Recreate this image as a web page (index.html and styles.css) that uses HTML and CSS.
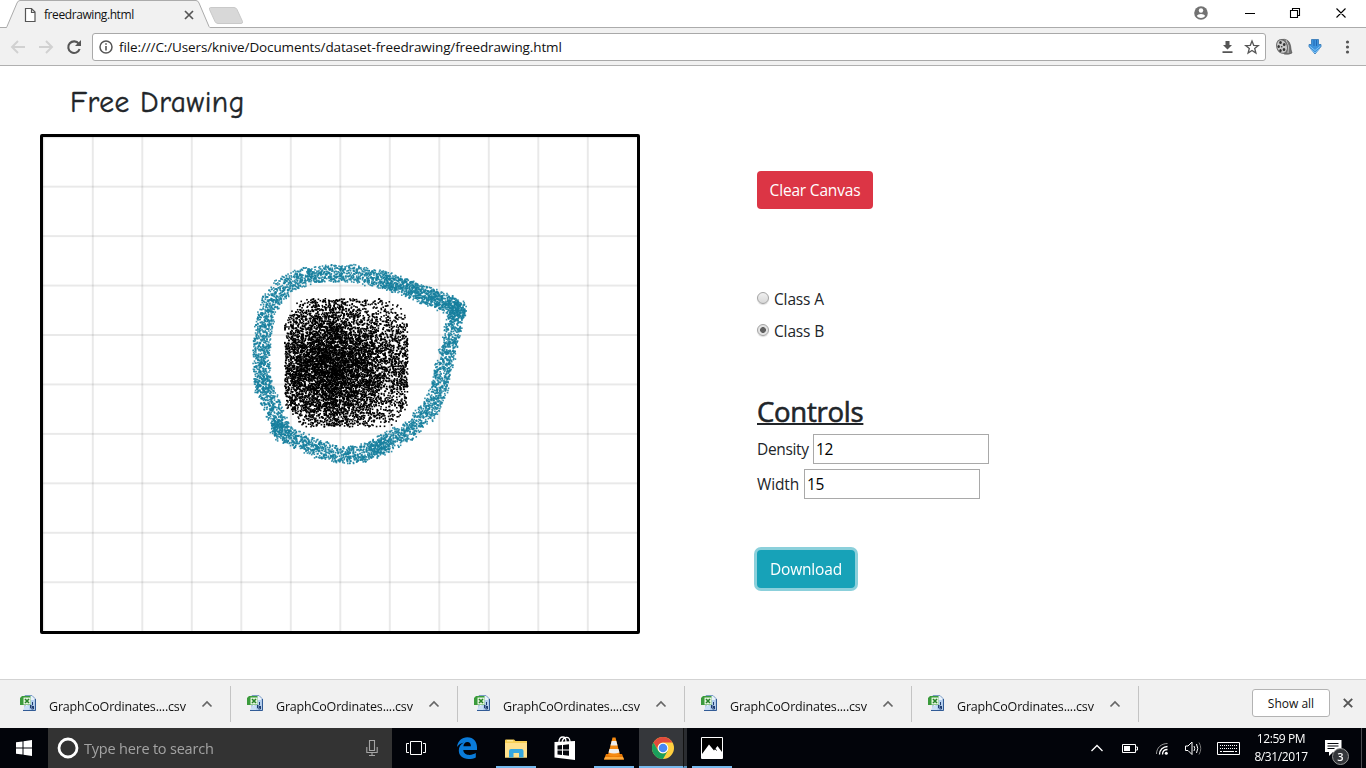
FILE: index.html
```html
<!DOCTYPE html>
<html lang="en">
<head>
<meta charset="utf-8">
<title>freedrawing.html</title>
<link rel="stylesheet" href="styles.css">
</head>
<body>
<svg class="defs" width="0" height="0" aria-hidden="true">
  <symbol id="csv" viewBox="0 0 16 16">
    <path d="M5 .5h7l3 3v12H5z" fill="#e8f1fb" stroke="#7b9cc6"/>
    <path d="M8 5h6.500v10H7z" fill="#b4cff0"/><path d="M5 11h4v4H3z" fill="#c9def5"/>
    <path d="M15.500 4v11.500H3" stroke="#315b96" fill="none"/>
    <path d="M2 1h8.500v9H0V3z" fill="#3b9b3c"/><path d="M3.500 2.500h7v7h-7z" fill="#e6f4df"/>
    <path d="M5 4l4 4M9 4L5 8" stroke="#278229" stroke-width="1.600"/>
    <path d="M12.500 7v3M10.500 10v3h2v-2h-2M13.500 11v3h-2" stroke="#203e70" fill="none"/>
  </symbol>
  <symbol id="chevron" viewBox="0 0 12 8"><path d="M1.500 6.500L6 2l4.500 4.500" fill="none" stroke="currentColor" stroke-width="1.700"/></symbol>
</svg>

<header class="tabstrip">
  <svg class="tab-shapes" width="250" height="28" viewBox="0 0 250 28">
    <path d="M0 28.500H5Q6.500 28 7 26.500L17 3Q18 .5 20 .5H196Q198 .5 199 3L209 26.500Q210 28 212 28.500z" fill="#f1f1f1" stroke="#ababab"/>
    <path d="M210.500 7.500H234q2 0 3 2l5.500 12q.5 2-1.500 2h-23q-2 0-3-2l-5.500-12q-.5-2 1-2z" fill="#d8d8d8" stroke="#c9c9c9"/>
    <path d="M25.500 8.500h6l3.500 3.500v9.500h-9.500zM31.500 8.500v4H35" fill="#fff" stroke="#555" stroke-width="1.200"/>
    <path d="M185 11l8 8M193 11l-8 8" stroke="#555" stroke-width="1.700"/>
  </svg>
  <span class="tab-title">freedrawing.html</span>
  <svg class="window-buttons" width="166" height="28" viewBox="0 0 166 28">
    <circle cx="7" cy="13" r="6.800" fill="#727272"/><circle cx="7" cy="10.500" r="2.200" fill="#fff"/><path d="M2.800 16c1-2.700 7.400-2.700 8.400 0-2 2.600-6.400 2.600-8.400 0z" fill="#fff"/>
    <path d="M51 13.500h10M96.500 10.500h7v7h-7zM98.500 10V8.500h7v7H104M142.500 8.500l9 9M151.500 8.500l-9 9" fill="none" stroke="#000" stroke-width="1.100"/>
  </svg>
</header>

<nav class="toolbar">
  <svg class="nav-icons" width="80" height="18" viewBox="0 0 80 18" fill="none" stroke-width="2">
    <path d="M17 9H4.500M10 3L4 9l6 6M31 9h12.500M38 3l6 6-6 6" transform="translate(-1 0)" stroke="#d1d1d1" stroke-width="1.900"/>
    <path d="M69.800 5.800A5.800 5.800 0 1 0 70.600 11" stroke="#555" stroke-width="2.100"/><path d="M72 2v6h-6z" fill="#555"/>
  </svg>
  <div class="address">
    <svg width="14" height="14" viewBox="0 0 14 14"><circle cx="7" cy="7" r="6" fill="none" stroke="#555" stroke-width="1.500"/><path d="M7 6v4.500M7 3.200v1.600" stroke="#555" stroke-width="1.600"/></svg>
    <span class="url">file:///C:/Users/knive/Documents/dataset-freedrawing/freedrawing.html</span>
    <svg class="address-icons" width="40" height="16" viewBox="0 0 40 16">
      <path d="M5.500 2h4v4h2.500L7.500 10.500 3 6h2.500zM2.500 12.300h10v1.600h-10z" fill="#555"/>
      <path d="M32 2l1.700 4.300 4.600.3-3.600 2.900 1.200 4.500L32 11.500 28.100 14l1.200-4.500-3.600-2.900 4.600-.3z" fill="none" stroke="#555" stroke-width="1.300"/>
    </svg>
  </div>
  <svg class="extensions" width="84" height="20" viewBox="0 0 84 20">
    <path d="M6 2.500Q14 1 15.500 8.500q.5 5 1.500 7.500-3 2-8 1z" fill="#747474" stroke="#444" stroke-width=".6"/><path d="M11 3q4 6 2 13" stroke="#c4c4c4" fill="none"/>
    <ellipse cx="7" cy="9.500" rx="5.300" ry="7" fill="#c9c9c9" stroke="#666" transform="rotate(-18 7 9.500)"/>
    <g fill="#333"><ellipse cx="5.500" cy="5.500" rx="1.300" ry="1.600"/><ellipse cx="9.200" cy="7.500" rx="1.300" ry="1.600"/><ellipse cx="9" cy="12.500" rx="1.300" ry="1.600"/><ellipse cx="5.500" cy="13.500" rx="1.200" ry="1.500"/><ellipse cx="3.700" cy="9.500" rx="1.200" ry="1.500"/><circle cx="6.700" cy="9.700" r=".8"/></g>
    <path d="M36.500 2.500h7v5h2.500v2L40 17l-6-7.500v-2h2.500z" fill="#3d93dc" stroke="#2f74b4" stroke-width=".8"/><path d="M34.500 9l5.500 4.500L45.500 9M35.500 12l4.500 4 4.500-4" fill="none" stroke="#80c3f5"/><path d="M39 3v6M41.500 3v6" stroke="#2168b5"/>
    <g fill="#555"><circle cx="72.500" cy="5" r="1.600"/><circle cx="72.500" cy="10" r="1.600"/><circle cx="72.500" cy="15" r="1.600"/></g>
  </svg>
</nav>

<main class="page">
  <section class="drawing">
    <h1 class="title">Free Drawing</h1>
    <canvas class="board" id="board" width="594" height="494"></canvas>
  </section>
  <section class="panel">
    <button class="btn btn-danger">Clear Canvas</button>
    <div class="classes">
      <label class="choice"><span class="radio"></span><span>Class A</span></label>
      <label class="choice"><span class="radio radio-on"></span><span>Class B</span></label>
    </div>
    <h2 class="controls-title">Controls</h2>
    <label class="field"><span class="label-density">Density</span><input class="number" value="12"></label>
    <label class="field"><span>Width</span><input class="number" value="15"></label>
    <button class="btn btn-info">Download</button>
  </section>
</main>

<aside class="shelf">
  <div class="file"><svg width="16" height="16"><use href="#csv"/></svg><span class="file-name">GraphCoOrdinates....csv</span><svg class="chev" width="12" height="8"><use href="#chevron"/></svg></div>
  <div class="file"><svg width="16" height="16"><use href="#csv"/></svg><span class="file-name">GraphCoOrdinates....csv</span><svg class="chev" width="12" height="8"><use href="#chevron"/></svg></div>
  <div class="file"><svg width="16" height="16"><use href="#csv"/></svg><span class="file-name">GraphCoOrdinates....csv</span><svg class="chev" width="12" height="8"><use href="#chevron"/></svg></div>
  <div class="file"><svg width="16" height="16"><use href="#csv"/></svg><span class="file-name">GraphCoOrdinates....csv</span><svg class="chev" width="12" height="8"><use href="#chevron"/></svg></div>
  <div class="file"><svg width="16" height="16"><use href="#csv"/></svg><span class="file-name">GraphCoOrdinates....csv</span><svg class="chev" width="12" height="8"><use href="#chevron"/></svg></div>
  <button class="show-all">Show all</button>
  <svg class="shelf-close" width="10" height="10" viewBox="0 0 10 10"><path d="M.8.8l8.400 8.400M9.200.8L.8 9.200" stroke="#555" stroke-width="1.900"/></svg>
</aside>

<footer class="taskbar">
  <div class="start"><svg width="16" height="16" viewBox="0 0 16 16"><path d="M0 2.300L6.500 1.400v6.100H0zM7.500 1.200L16 0v7.500H7.500zM0 8.500h6.500v6.100L0 13.700zM7.500 8.500H16V16l-8.500-1.200z" fill="#fff"/></svg></div>
  <div class="search">
    <svg width="22" height="22" viewBox="0 0 22 22"><circle cx="11" cy="11" r="9" fill="none" stroke="#fff" stroke-width="2.800"/></svg>
    <span class="search-text">Type here to search</span>
    <svg class="mic" width="12" height="18" viewBox="0 0 12 18"><path d="M3.500 1.500h5v10h-5zM.8 8v5.500h10.400V8M6 13.500v3M3 16.500h6" fill="none" stroke="#a5a5a5" stroke-width="1.100"/></svg>
  </div>
  <div class="app app-view"><svg width="20" height="14" viewBox="0 0 20 14"><path d="M4.500.5h11v13h-11zM3 2.500H.5v9H3M17 2.500h2.500v9H17" fill="none" stroke="#fff"/></svg></div>
  <div class="app app-edge"><svg width="20" height="22" viewBox="0 0 20 22"><path d="M0 10C.8 3.800 5 .3 10.300.3 16.700.3 20 5 20 10.300V13H6.300c.2 3.500 3 4.900 6.200 4.900 2.400 0 4.500-.7 6.300-1.800v4.300c-2 1.100-4.600 1.600-7.200 1.600C5.500 22 1.800 18.600 1.800 13.600c0-3.500 1.800-6.500 5-8.100C4 6.200 1.500 7.600 0 10zm6.400-.8h7.500c0-2.500-1-4.300-3.500-4.300-2.300 0-3.700 1.800-4 4.300z" fill="#0a7bd9"/></svg></div>
  <div class="app app-folder running"><svg width="22" height="19" viewBox="0 0 22 19"><path d="M0 1.500Q0 .5 1 .5h8L10.500 2H22v16.500H0z" fill="#f7cf55"/><path d="M0 4h22v14.500H0z" fill="#ffe18d"/><path d="M2 1.800h6" stroke="#fff3b8"/><path d="M4 18.500V12q0-2 2-2h10.500q2 0 2 2v6.500H14V14H8.500v4.500z" fill="#35a7df"/></svg></div>
  <div class="app app-store"><svg width="22" height="24" viewBox="0 0 22 24"><path d="M5 6Q5 1 9 1q3 0 3 5M8 6q1-4 4-4.500Q16 1 16 6" fill="none" stroke="#fff" stroke-width="1.300"/><path d="M.5 6l20.500-1v19L.5 21.500z" fill="#fff"/><path d="M3.500 9.500l4.500-.5v4.500H3.500zM9 8.900l6-.6v5.200H9zM3.500 14.500H8V19l-4.500-.5zM9 14.500h6v5.200l-6-.6z" fill="#05070d"/></svg></div>
  <div class="app app-vlc running"><svg width="20" height="23" viewBox="0 0 20 23"><path d="M2 17h16l2 5.500H0z" fill="#e87905"/><path d="M8.500.5h3L16 18q-6 3-12 0z" fill="#f58a12"/><path d="M7.700 4h4.600l1.200 4.500h-7zM5.500 12h9l1 3.500q-5.500 2-11 0z" fill="#eee"/><path d="M1 20h18l1 2.500H0z" fill="#ffaa39"/></svg></div>
  <div class="app app-chrome running"><svg width="22" height="22" viewBox="0 0 22 22"><circle cx="11" cy="11" r="11" fill="#ffcf3f"/><path d="M1.470 5.500A11 11 0 0 1 20.500 5.500H11A5.500 5.500 0 0 0 6.200 13.700z" fill="#e04a3c"/><path d="M1.470 5.500L6.200 13.700A5.500 5.500 0 0 0 15.800 13.700L11 22A11 11 0 0 1 1.470 5.500z" fill="#1a9f5c"/><circle cx="11" cy="11" r="5.300" fill="#fff"/><circle cx="11" cy="11" r="4.300" fill="#4788f4"/></svg></div>
  <div class="app-stack"></div>
  <div class="app app-photos running"><svg width="22" height="22" viewBox="0 0 22 22"><path d="M.5.5h21v21H.5z" fill="#000" stroke="#fff"/><path d="M1 17l7-9.500 5 6 3.500-4.500L21 15v6.500H1z" fill="#fff"/><path d="M12 9l3.500 4.500" stroke="#000"/></svg></div>
  <svg class="tray" width="152" height="20" viewBox="0 0 152 20" fill="none" stroke="#fff">
    <path d="M1.500 13L7 7.500l5.500 5.500" stroke-width="1.300"/>
    <path d="M32.500 6.500h13v8h-13zM46 9h1.500v3H46"/><path d="M34 8h6v5h-6z" fill="#fff" stroke="none"/>
    <path d="M69.500 16.500C69.500 12 73 8.500 77.500 8.500M72.500 16.500c0-3 2-5 5-5" stroke-width="1.300"/><path d="M66.500 16C66.500 10 71 5.500 77.500 5.500" stroke="#999"/><circle cx="76.300" cy="15.300" r="1.500" fill="#fff" stroke="none"/>
    <path d="M95.500 8v4.500H98l4 4V4l-4 4zM104 8q1.500 2.500 0 5M106.500 6q2.500 4.500 0 9"/><path d="M109 4.500q3.500 6 0 12" stroke="#777"/>
    <path d="M127.500 4.500h22v12h-22z"/><path d="M130 7.500h17M130 10.500h17" stroke-dasharray="1 1"/><path d="M130 13.500h2M133 13.500h11M145 13.500h2"/>
  </svg>
  <div class="clock"><span>12:59 PM</span><span>8/31/2017</span></div>
  <div class="notice"><svg width="17" height="17" viewBox="0 0 17 17"><path d="M0 0h16.500v12H8l-4 4v-4H0z" fill="#fff"/><path d="M2.500 3.500h11M2.500 6h11M2.500 8.500h7" stroke="#05070d"/></svg><span class="badge">3</span></div>
</footer>
<script src="script.js"></script>
</body>
</html>
```
FILE: styles.css
```css
* { box-sizing: border-box; }
body { margin: 0; width: 1366px; height: 768px; overflow: hidden; display: flex; flex-direction: column; background: #fff; color: #212529; font-family: "Open Sans", "Noto Sans", sans-serif; }
svg { display: block; flex: none; }
.defs { position: absolute; }
button { font-family: inherit; margin: 0; }
span { white-space: nowrap; }

.tabstrip { height: 28px; flex: none; display: flex; justify-content: space-between; position: relative; box-shadow: inset 0 -1px #ababab; }
.tab-title { position: absolute; left: 44px; top: 7px; font-size: 12px; line-height: 16px; color: #111; letter-spacing: -.42px; }
.window-buttons { margin-right: 6px; }
.toolbar { height: 38px; flex: none; display: flex; align-items: center; background: #f1f1f1; border-bottom: 1px solid #b0b0b0; padding-left: 9px; }
.nav-icons { margin-right: 3px; }
.address { width: 1174px; height: 28px; display: flex; align-items: center; background: #fff; border: 1px solid #a9a9a9; border-radius: 3px; padding: 0 5px 0 6px; }
.url { margin-left: 6px; color: #111; font-size: 13.500px; letter-spacing: -.12px; }
.address-icons { margin-left: auto; }
.extensions { margin-left: 9px; }

.page { flex: 1; display: flex; padding-left: 40px; }
.drawing { width: 600px; }
.title { margin: 16px 0 0 30px; height: 52px; font: 400 29.500px/41px "Comic Sans MS", "Comic Neue", Lato, sans-serif; letter-spacing: .5px; -webkit-text-stroke: .4px #212529; }
.board { display: block; box-sizing: content-box; border: 3px solid #000; border-radius: 2px; }
.panel { padding: 105px 0 0 117px; display: flex; flex-direction: column; align-items: flex-start; font-size: 15.500px; letter-spacing: -.15px; }
.btn { border: 0; border-radius: 4px; height: 38px; color: #fff; font-size: 15.500px; letter-spacing: -.18px; padding: 0; }
.btn-danger { width: 116px; background: #dc3545; }
.btn-info { width: 98px; background: #17a2b8; box-shadow: 0 0 0 3px #8bd0db; }
.classes { margin-top: 78px; display: grid; gap: 8px; }
.choice { display: flex; align-items: center; height: 24px; line-height: 24px; gap: 5px; }
.radio { width: 12px; height: 12px; border: 1px solid #a3a3a3; border-radius: 50%; background: linear-gradient(#f0f0f0, #d8d8d8); box-shadow: 0 1px 1px #ddd; margin-top: -3px; }
.radio-on { background: radial-gradient(circle, #606060 0 2.600px, #e3e3e3 3.200px); }
.controls-title { margin: 52px 0 5px; height: 34px; font-size: 27.500px; line-height: 34px; font-weight: 500; letter-spacing: -.25px; -webkit-text-stroke: .6px #212529; text-decoration: underline; text-decoration-thickness: 2px; }
.field { display: flex; align-items: center; height: 30px; margin-bottom: 5px; gap: 5px; }
.label-density { width: 51px; letter-spacing: -.35px; }
.field + .btn-info { margin-top: 46px; }
.number { width: 176px; height: 30px; border: 1px solid #a9a9a9; padding: 1px 2px; font: 15.500px "Open Sans", sans-serif; letter-spacing: -.4px; color: #000; background: #fff; }

.shelf { height: 49px; flex: none; background: #f1f1f1; border-top: 1px solid #d3d3d3; display: flex; align-items: flex-start; }
.file { width: 227px; height: 36px; margin-top: 6px; padding-left: 16px; display: flex; align-items: center; border-right: 1px solid #c4c4c4; }
.file:first-child { width: 231px; padding-left: 20px; }
.file > svg:first-child { margin-top: -3px; }
.file-name { width: 139px; margin: 6px 13px 0 13px; font-size: 12.500px; line-height: 18px; letter-spacing: -.18px; color: #111; }
.chev { color: #666; }
.show-all { margin: 9px 13px 0 auto; width: 78px; height: 28px; border: 1px solid #b3b3b3; border-radius: 3px; background: #fff; font-size: 12px; color: #111; padding: 0; }
.shelf-close { margin: 18px 13px 0 0; }

.taskbar { height: 40px; flex: none; display: flex; align-items: center; background: #02040a; color: #fff; position: relative; }
.start { width: 48px; display: flex; justify-content: center; }
.search { width: 344px; height: 40px; background: #333; display: flex; align-items: center; padding: 0 14px 0 9px; }
.search-text { color: #a3a3a3; font-size: 14.500px; letter-spacing: -.2px; margin-left: 5px; }
.mic { margin-left: auto; }
.app { height: 40px; display: flex; align-items: center; justify-content: center; width: 48px; }
.app-edge { margin-left: 3px; }
.running { border-bottom: 2px solid #76b9ed; width: 40px; padding-top: 2px; }
.app-folder { margin-left: 5px; }
.app-store { margin-left: 5px; }
.app-vlc { margin-left: 5px; }
.app-chrome { width: 44px; background: #35373b; margin-left: 5px; padding-left: 4px; }
.app-stack { width: 4px; height: 40px; background: #2b2d31; border-left: 1px solid #111; border-bottom: 2px solid #5b94bf; }
.app-photos { margin-left: 5px; }
.tray { margin: 0 0 0 auto; }
.clock { width: 64px; margin-left: 7px; display: flex; flex-direction: column; align-items: center; font-size: 12px; line-height: 18px; letter-spacing: -.4px; padding-bottom: 1px; }
.notice { position: relative; margin: 0 24px 0 12px; }
.badge { position: absolute; left: 7px; top: 8px; width: 17px; height: 17px; border: 1px solid #999; border-radius: 50%; background: #34363a; font-size: 11px; line-height: 15px; text-align: center; font-weight: 600; }
.taskbar::after { content: ""; position: absolute; right: 4px; top: 0; width: 1px; height: 40px; background: #4a4b50; }
```
FILE: script.js
```js
const ctx = document.getElementById('board').getContext('2d');

// Seeded generator, so the spray is the same on every load.
let seed = 20170831;
function random() {
  seed = (seed * 1664525 + 1013904223) >>> 0;
  return seed / 4294967296;
}

// Points are in window coordinates; the board's content starts at (43, 137).
ctx.translate(-43, -137);

ctx.fillStyle = 'rgba(0,0,0,.085)';
for (let i = 0; i < 12; i++) ctx.fillRect(42.3 + i * 49.5, 137, 2, 494);
for (let i = 0; i < 10; i++) ctx.fillRect(43, 136.2 + i * 49.45, 594, 2);

const SIZE = 1.6;
function dot(x, y) { ctx.fillRect(x, y, SIZE, SIZE); }

function spray(points, density, half) {
  for (let i = 1; i < points.length; i++) {
    const [x0, y0] = points[i - 1], [x1, y1] = points[i];
    const n = Math.round(Math.hypot(x1 - x0, y1 - y0) * density);
    for (let k = 0; k < n; k++) {
      const t = random();
      let a, b;
      do { a = random() * 2 - 1; b = random() * 2 - 1; } while (a ** 4 + b ** 4 > 1);
      dot(x0 + (x1 - x0) * t + a * half - .6, y0 + (y1 - y0) * t + b * half - .6);
    }
  }
}

ctx.fillStyle = 'rgba(23,127,158,.88)';
const outline = [[457, 310], [453, 325], [451, 340], [446, 358], [441, 375], [440, 388], [432, 405], [422, 418],
  [408, 431], [392, 439], [378, 448], [357, 455], [338, 454], [318, 449], [300, 441], [283, 433], [277, 418],
  [271, 403], [263, 386], [261, 365], [262, 342], [264, 320], [271, 301], [283, 287], [296, 279], [313, 274],
  [335, 273], [352, 273], [370, 277], [388, 281], [410, 289], [430, 297], [457, 308]];
spray(outline, 7.5, 8.8);
spray([[380, 281], [400, 285], [430, 296], [457, 307]], 4, 7);
spray([[456, 308], [458, 312]], 34, 8.5);
spray([[276, 426], [282, 432]], 16, 8);
spray([[370, 450], [386, 443]], 6, 8);
spray([[263, 381], [265, 388]], 10, 8);

// The black patch is a pile of separate clicks: dense to the left, loose at the rim.
ctx.fillStyle = '#000';
for (let k = 0; k < 7400; k++) {
  const x = random() < .55 ? 284 + random() * 123 : 278 + (random() + random()) * 53;
  const y = random() < .4 ? 298 + random() * 128 : 304 + (random() + random()) * 61;
  const u = (x - 346) / 62, v = (y - 362) / 64.5;
  const r = Math.abs(u) ** 3 + Math.abs(v) ** 3;
  if (x >= 284 && r <= 1.05 + random() * .3) dot(x, y);
}
```
